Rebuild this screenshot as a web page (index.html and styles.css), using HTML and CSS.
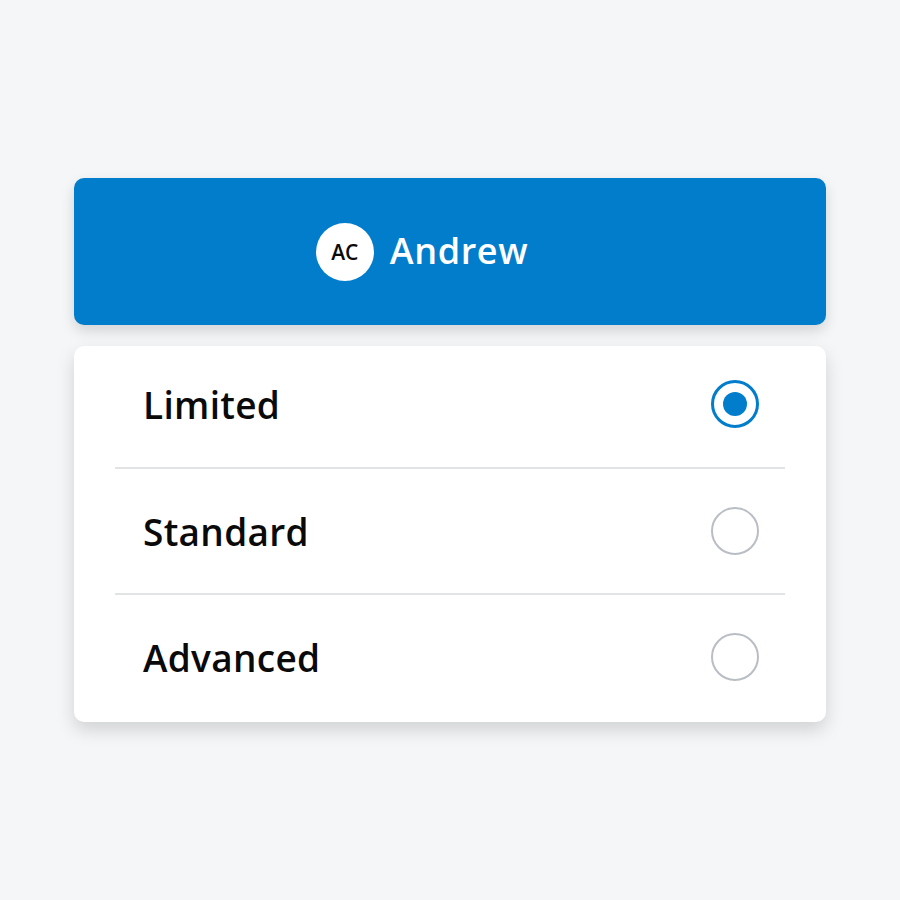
FILE: index.html
```html
<!DOCTYPE html>
<html lang="en">
<head>
<meta charset="utf-8">
<title>Profile access</title>
<link rel="stylesheet" href="styles.css">
</head>
<body>
<main class="page">
  <header class="profile">
    <span class="avatar">AC</span>
    <span class="name">Andrew</span>
  </header>
  <section class="options">
    <div class="row row-first">
      <span class="label">Limited</span>
      <span class="radio checked"></span>
    </div>
    <div class="row row-mid">
      <span class="label">Standard</span>
      <span class="radio"></span>
    </div>
    <div class="row row-last">
      <span class="label">Advanced</span>
      <span class="radio"></span>
    </div>
  </section>
</main>
</body>
</html>
```
FILE: styles.css
```css
html, body {
  margin: 0;
  padding: 0;
  background: #f5f6f8;
}
body {
  font-family: "Open Sans", "Liberation Sans", sans-serif;
  color: #0a0a0a;
  min-height: 900px;
}
.page {
  width: 752px;
  padding: 178px 0 0 74px;
}
.profile {
  height: 147px;
  background: #027dcb;
  border-radius: 10px;
  box-shadow: 0 6px 14px rgba(0, 0, 0, 0.14);
  display: flex;
  align-items: center;
  justify-content: center;
  gap: 16px;
  padding-right: 56px;
  box-sizing: border-box;
}
.avatar {
  width: 58px;
  height: 58px;
  border-radius: 50%;
  background: #fff;
  color: #0a0a0a;
  font-size: 21px;
  font-weight: 600;
  display: flex;
  align-items: center;
  justify-content: center;
}
.name {
  color: #fff;
  font-size: 36px;
  font-weight: 600;
  letter-spacing: 0.6px;
  line-height: 1;
  padding-bottom: 2px;
}
.options {
  margin-top: 21px;
  background: #fff;
  border-radius: 10px;
  box-shadow: 0 8px 18px rgba(0, 0, 0, 0.15);
  padding: 0 41px;
  height: 376px;
  box-sizing: border-box;
}
.row {
  display: flex;
  align-items: center;
  justify-content: space-between;
  padding: 0 26px 0 28px;
  box-sizing: border-box;
}
.row-first {
  height: 123px;
  padding-bottom: 5px;
  border-bottom: 2px solid #e2e3e5;
}
.row-mid {
  height: 126px;
  border-bottom: 2px solid #e2e3e5;
}
.row-last {
  height: 127px;
  padding-bottom: 3px;
}
.label {
  font-size: 37px;
  font-weight: 600;
  letter-spacing: 0.3px;
  line-height: 1;
}
.radio {
  width: 48px;
  height: 48px;
  border-radius: 50%;
  border: 2.5px solid #b9bdc4;
  box-sizing: border-box;
  display: flex;
  align-items: center;
  justify-content: center;
}
.radio.checked {
  border: 3px solid #027dcb;
}
.radio.checked::after {
  content: "";
  width: 24px;
  height: 24px;
  border-radius: 50%;
  background: #027dcb;
}
```
